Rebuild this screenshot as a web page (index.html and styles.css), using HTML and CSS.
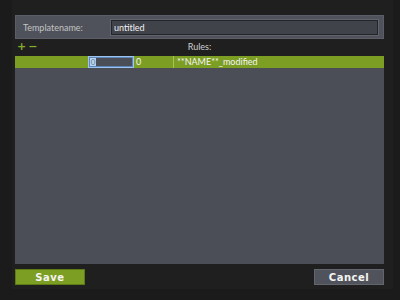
FILE: index.html
```html
<!DOCTYPE html>
<html lang="en">
<head>
  <meta charset="UTF-8" />
  <title>Template Editor</title>
  <link rel="stylesheet" href="styles.css">
</head>
<body>
  <div class="dialog">
    <div class="name-panel">
      <span class="name-label">Templatename:</span>
      <div class="name-input">untitled</div>
    </div>

    <div class="toolbar">
      <div class="tools">
        <span class="tool">+</span>
        <span class="tool minus">&minus;</span>
      </div>
      <span class="rules-title">Rules:</span>
    </div>

    <div class="rules">
      <div class="rule selected">
        <div class="cell cell-key"></div>
        <div class="cell cell-edit"><span class="sel">0</span></div>
        <div class="cell cell-value">0</div>
        <div class="cell cell-pattern">**NAME**_modified</div>
      </div>
    </div>

    <div class="buttons">
      <button class="btn btn-save">Save</button>
      <button class="btn btn-cancel">Cancel</button>
    </div>
  </div>
</body>
</html>
```

FILE: styles.css
```css
html, body {
  margin: 0;
  padding: 0;
  background: #1b1b1b;
  font-family: Lato, "Noto Sans", sans-serif;
  font-size: 9px;
  color: #d0d0d0;
}
.dialog {
  box-sizing: border-box;
  width: 381px;
  height: 289px;
  margin-left: 12px;
  padding: 15px 9px 0 3px;
  background: #1f1f1f;
  display: flex;
  flex-direction: column;
}
.name-panel {
  box-sizing: border-box;
  height: 24px;
  display: flex;
  align-items: center;
  padding: 0 5px 0 7px;
  background: #4f525a;
  border: 1px solid #5b5e66;
}
.name-label {
  width: 88px;
  color: #c4c4c4;
}
.name-input {
  flex: 1;
  box-sizing: border-box;
  height: 15px;
  line-height: 13px;
  padding-left: 2px;
  background: #40434a;
  border: 1px solid #24252a;
  box-shadow: 0 0 0 1px #62656c;
  color: #f2f2f2;
}
.toolbar {
  position: relative;
  height: 17px;
  display: flex;
  align-items: center;
  justify-content: center;
}
.tools {
  position: absolute;
  left: 2px;
  top: 1px;
  display: flex;
  gap: 2px;
}
.tool {
  color: #86ab2c;
  font-family: "DejaVu Sans", sans-serif;
  font-size: 11px;
  font-weight: bold;
  line-height: 14px;
}
.rules-title {
  color: #cfcfcf;
  margin-top: -2px;
}
.rules {
  height: 208px;
  background: #4b4e57;
}
.rule {
  height: 12px;
  display: flex;
  color: #f4f4f4;
  line-height: 12px;
}
.rule.selected {
  background: #7c9e23;
}
.cell-key {
  width: 73px;
}
.cell-edit {
  box-sizing: border-box;
  width: 46px;
  padding: 1px;
  background: #4a4e57;
  border: 1px solid #9cc4ee;
  box-shadow: inset 0 0 0 1px #5f86b8;
  display: flex;
}
.sel {
  width: 6px;
  height: 8px;
  line-height: 8px;
  font-size: 8px;
  background: #b7d3f0;
  color: #6a7a90;
  text-align: center;
}
.cell-value {
  width: 40px;
  padding-left: 2px;
  box-sizing: border-box;
  border-right: 1px solid #a5c35a;
}
.cell-pattern {
  padding-left: 3px;
}
.buttons {
  margin-top: 5px;
  display: flex;
  justify-content: space-between;
}
.btn {
  box-sizing: border-box;
  width: 70px;
  height: 16px;
  padding: 0;
  font-family: "DejaVu Sans", sans-serif;
  font-size: 10px;
  font-weight: bold;
  letter-spacing: 0.5px;
  color: #f4f4f4;
}
.btn-save {
  background: #7c9e23;
  border: 1px solid #5d7a14;
}
.btn-cancel {
  background: #50535b;
  border: 1px solid #62656c;
}
```
